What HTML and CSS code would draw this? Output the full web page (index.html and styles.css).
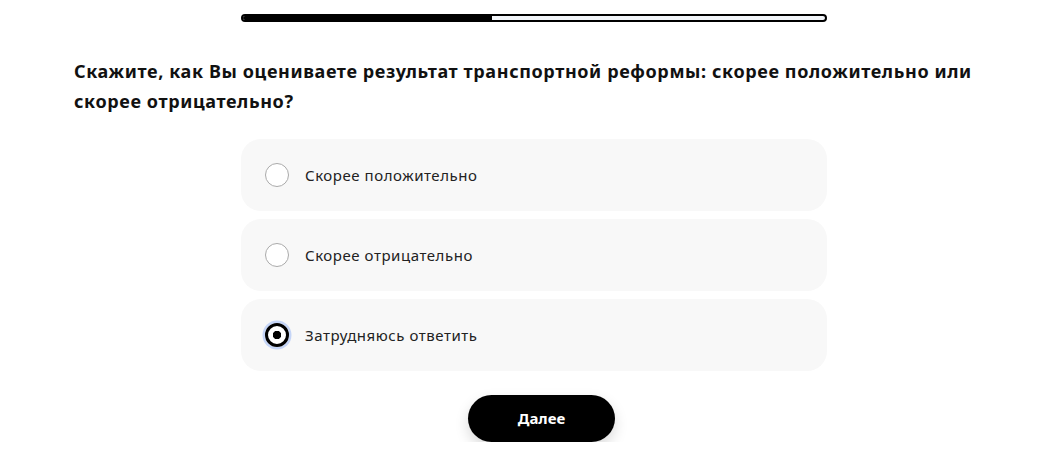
FILE: index.html
```html
<!DOCTYPE html>
<html lang="ru">
  <head>
    <meta charset="UTF-8" />
    <meta name="viewport" content="width=device-width, initial-scale=1.0" />
    <title>Опрос</title>
    <link rel="stylesheet" href="styles.css">
  </head>
  <body>
    <div class="survey">
      <div class="progress">
        <div class="progress-fill" style="width: 42.7%"></div>
      </div>

      <h2 class="question">
        Скажите, как Вы оцениваете результат транспортной реформы: скорее положительно или скорее отрицательно?
      </h2>

      <form class="answers">
        <label class="answer">
          <input type="radio" name="answer" value="1" />
          <span>Скорее положительно</span>
        </label>
        <label class="answer">
          <input type="radio" name="answer" value="2" />
          <span>Скорее отрицательно</span>
        </label>
        <label class="answer">
          <input type="radio" name="answer" value="3" checked />
          <span>Затрудняюсь ответить</span>
        </label>
      </form>

      <div class="actions">
        <button class="next">Далее</button>
      </div>
    </div>
  </body>
</html>
```

FILE: styles.css
```css
/* Resets */
body {
  margin: 0;
  font-family: "Noto Sans", "Open Sans", sans-serif;
  color: #1f1f1f;
  background: #fff;
}

/* Survey */
.survey {
  margin-left: 74px;
  width: 920px;
  padding-top: 14px;
}

/* Progress */
.progress {
  margin: 0 auto;
  width: 586px;
  height: 8px;
  box-sizing: border-box;
  border: 2px solid #000;
  border-radius: 4px;
  background-color: #f1f4f8;
  overflow: hidden;
}
.progress-fill {
  height: 100%;
  background-color: #000;
}

/* Question */
.question {
  margin: 34px 0 23px;
  font-size: 18px;
  line-height: 30px;
  font-weight: 700;
  letter-spacing: 0.62px;
  color: #111;
}

/* Answers */
.answers {
  margin: 0 auto;
  width: 586px;
  display: flex;
  flex-direction: column;
  gap: 8px;
}
.answer {
  height: 72px;
  display: flex;
  align-items: center;
  gap: 16px;
  padding-left: 24px;
  border-radius: 20px;
  background-color: #f8f8f8;
  font-size: 15px;
  letter-spacing: 0.55px;
  color: #222;
  cursor: pointer;
}
.answer span {
  margin-top: -1px;
}
.answer input {
  appearance: none;
  margin: 0;
  width: 24px;
  height: 24px;
  box-sizing: border-box;
  border: 1px solid #aaa;
  border-radius: 50%;
  background: #fff;
}
.answer input:checked {
  border: 3px solid #000;
  background: radial-gradient(circle, #000 0 4px, #fff 4.5px);
  box-shadow: 0 0 0 2.5px #c5d5f7;
}

/* Button */
.actions {
  display: flex;
  justify-content: center;
  padding: 24px 0 0 15px;
}
.next {
  width: 147px;
  height: 47px;
  padding-bottom: 3px;
  border: none;
  border-radius: 24px;
  background-color: #000;
  color: #fff;
  font-family: inherit;
  font-size: 15px;
  font-weight: 700;
  box-shadow: 0 6px 14px rgba(0, 0, 0, 0.15);
  cursor: pointer;
}
```
